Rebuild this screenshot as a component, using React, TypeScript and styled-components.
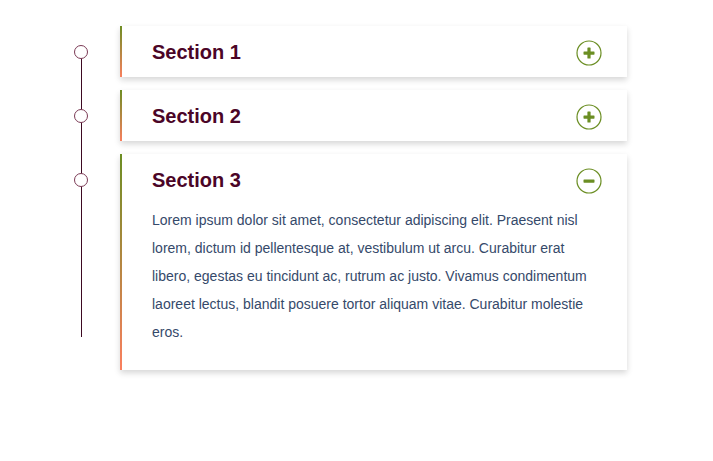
import React, { FC, useState } from "react";
import styled, { createGlobalStyle } from "styled-components";

const GlobalStyle = createGlobalStyle`
  html, body {
    margin: 0;
    padding: 0;
    background: #ffffff;
    font-family: "Liberation Sans", Arial, sans-serif;
  }
`;

interface ISection {
  id: number;
  title: string;
  body: string;
}

const sections: ISection[] = [
  { id: 1, title: "Section 1", body: "" },
  { id: 2, title: "Section 2", body: "" },
  {
    id: 3,
    title: "Section 3",
    body:
      "Lorem ipsum dolor sit amet, consectetur adipiscing elit. Praesent nisl lorem, dictum id pellentesque at, vestibulum ut arcu. Curabitur erat libero, egestas eu tincidunt ac, rutrum ac justo. Vivamus condimentum laoreet lectus, blandit posuere tortor aliquam vitae. Curabitur molestie eros.",
  },
];

const ToggleIcon: FC<{ open: boolean }> = ({ open }) => (
  <svg width="26" height="26" viewBox="0 0 26 26">
    <circle cx="13" cy="13" r="12" fill="#fff" stroke="#6b8e23" strokeWidth="1.2" />
    <rect x="7.5" y="11.5" width="11" height="3.2" rx="0.6" fill="#6b8e23" />
    {!open && <rect x="11.4" y="7.5" width="3.2" height="11" rx="0.6" fill="#6b8e23" />}
  </svg>
);

export default function App() {
  const [openId, setOpenId] = useState<number>(3);

  return (
    <>
      <GlobalStyle />
      <Timeline>
        {sections.map((s) => {
          const open = openId === s.id;
          return (
            <Row key={s.id}>
              <Marker>
                <Dot />
              </Marker>
              <Card>
                <Header onClick={() => setOpenId(open ? 0 : s.id)}>
                  <Title>{s.title}</Title>
                  <ToggleIcon open={open} />
                </Header>
                {open && <Body>{s.body}</Body>}
              </Card>
            </Row>
          );
        })}
      </Timeline>
    </>
  );
}

const Timeline = styled.div`
  position: relative;
  display: flex;
  flex-direction: column;
  gap: 13px;
  padding: 26px 0 40px 74px;

  &::before {
    content: "";
    position: absolute;
    left: 81px;
    top: 53px;
    bottom: 73px;
    width: 1px;
    background: #3d0a22;
  }
`;

const Row = styled.div`
  display: flex;
  align-items: flex-start;
`;

const Marker = styled.div`
  width: 46px;
  flex-shrink: 0;
  padding-top: 19px;
`;

const Dot = styled.div`
  position: relative;
  z-index: 1;
  width: 12px;
  height: 12px;
  border: 1.5px solid #7b3a55;
  border-radius: 50%;
  background: #ffffff;
`;

const Card = styled.div`
  width: 505px;
  background: #ffffff;
  border-left: 2px solid #6b8e23;
  border-image: linear-gradient(to bottom, #6b8e23, #fb7f5f) 1;
  box-shadow: 0 3px 6px rgba(0, 0, 0, 0.16);
`;

const Header = styled.div`
  box-sizing: border-box;
  height: 51px;
  display: flex;
  align-items: center;
  justify-content: space-between;
  padding: 2px 25px 0 30px;
  cursor: pointer;
`;

const Title = styled.h3`
  margin: 0;
  font-size: 20px;
  font-weight: bold;
  color: #4b0527;
`;

const Body = styled.p`
  margin: 0;
  padding: 1px 26px 24px 30px;
  font-size: 14px;
  line-height: 28px;
  color: #35496a;
`;
